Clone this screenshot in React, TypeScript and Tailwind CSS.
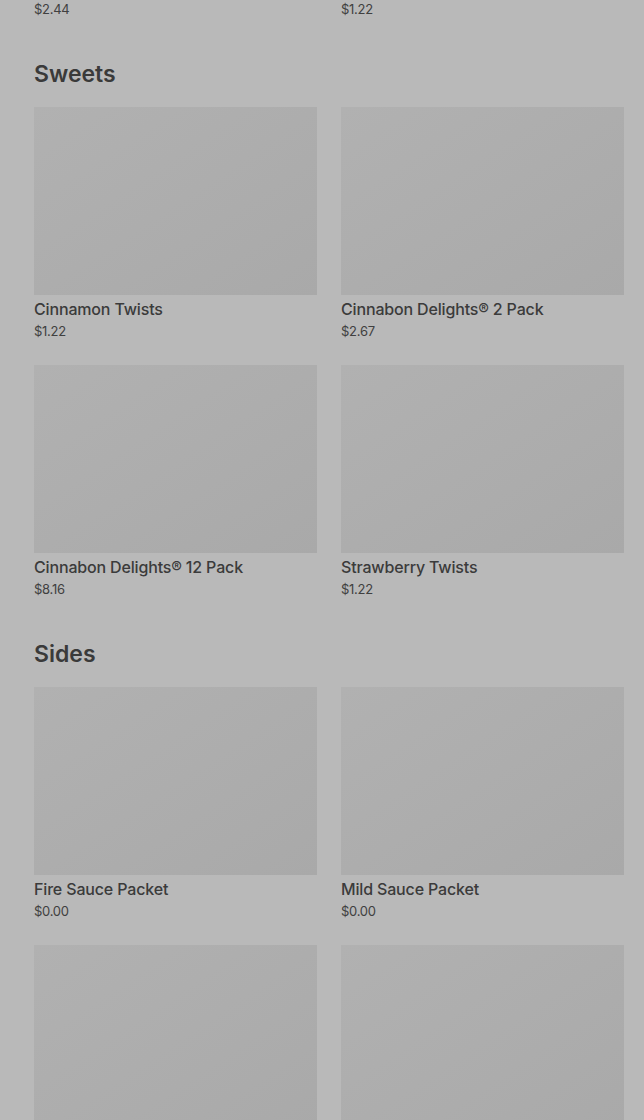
type Item = { name?: string; price?: string };

const sections: { title: string; items: Item[] }[] = [
  {
    title: "Sweets",
    items: [
      { name: "Cinnamon Twists", price: "$1.22" },
      { name: "Cinnabon Delights® 2 Pack", price: "$2.67" },
      { name: "Cinnabon Delights® 12 Pack", price: "$8.16" },
      { name: "Strawberry Twists", price: "$1.22" },
    ],
  },
  {
    title: "Sides",
    items: [
      { name: "Fire Sauce Packet", price: "$0.00" },
      { name: "Mild Sauce Packet", price: "$0.00" },
      {},
      {},
    ],
  },
];

function MenuCard({ item }: { item: Item }) {
  return (
    <div className="flex flex-col">
      <div className="h-[188px] w-full bg-gradient-to-br from-[#b1b1b1] to-[#a9a9a9]" />
      {item.name && (
        <div className="mt-[4px] text-[16px] leading-[20px] font-medium tracking-[-0.01em] text-[#3b3b3b]">
          {item.name}
        </div>
      )}
      {item.price && (
        <div className="mt-[3px] text-[13px] leading-[18px] tracking-[-0.02em] text-[#404040]">{item.price}</div>
      )}
    </div>
  );
}

export default function App() {
  return (
    <div
      className="h-[1120px] w-[644px] overflow-hidden bg-[#b9b9b9] pl-[34px] pr-[20px]"
      style={{ fontFamily: "Inter, 'Liberation Sans', sans-serif" }}
    >
      <div className="grid grid-cols-2 gap-x-[24px]">
        <div className="text-[13px] leading-[18px] tracking-[-0.02em] text-[#404040]">$2.44</div>
        <div className="text-[13px] leading-[18px] tracking-[-0.02em] text-[#404040]">$1.22</div>
      </div>

      {sections.map((section) => (
        <section key={section.title} className="pt-[42px]">
          <h2 className="mb-[19px] text-[23px] leading-[28px] font-semibold text-[#3a3a3a]">
            {section.title}
          </h2>
          <div className="grid grid-cols-2 gap-x-[24px] gap-y-[25px]">
            {section.items.map((item, i) => (
              <MenuCard key={i} item={item} />
            ))}
          </div>
        </section>
      ))}
    </div>
  );
}
